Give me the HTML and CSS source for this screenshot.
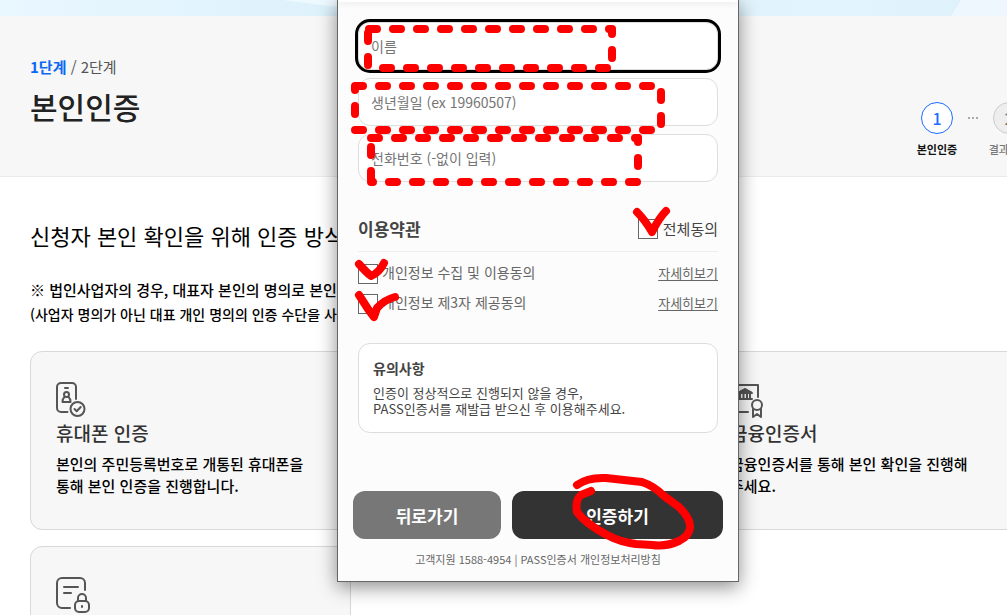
FILE: index.html
```html
<!DOCTYPE html>
<html lang="ko">
<head>
    <meta charset="UTF-8">
    <meta name="viewport" content="width=device-width, initial-scale=1.0">
    <title>본인인증</title>
    <link rel="stylesheet" href="styles.css">
</head>
<body>
    <div class="page">
        <div class="banner">
            <svg class="banner-art" viewBox="0 0 1007 16" preserveAspectRatio="none" aria-hidden="true">
                <path d="M283 0 Q310 4 340 7 L340 0Z" fill="#edf8ff"/>
                <path d="M961 0 L951 16 L1007 16 L1007 0Z" fill="#eef7fe"/>
            </svg>
        </div>

        <header class="page-header">
            <div>
                <p class="step-text"><strong>1단계</strong> / 2단계</p>
                <h1>본인인증</h1>
            </div>
            <ol class="steps">
                <li class="step active"><span class="circle">1</span>본인인증</li>
                <li class="dots" aria-hidden="true"><i></i><i></i><i></i></li>
                <li class="step"><span class="circle">2</span>결과확인</li>
            </ol>
        </header>

        <main class="content">
            <h2>신청자 본인 확인을 위해 인증 방식</h2>
            <p class="note"><b>※</b> 법인사업자의 경우, 대표자 본인의 명의로 본인인증</p>
            <p class="note small">(사업자 명의가 아닌 대표 개인 명의의 인증 수단을 사용</p>

            <div class="cards">
                <section class="card">
                    <svg class="icon" viewBox="0 0 36 36" aria-hidden="true">
                        <path d="M11.5 30H5a4 4 0 0 1-4-4V5a4 4 0 0 1 4-4h11a4 4 0 0 1 4 4v12M9 6h3"/>
                        <circle cx="10.5" cy="12.500" r="2.500"/>
                        <path d="M8.500 15Q6.500 16.500 6.500 20h8Q14.500 16.500 12.500 15"/>
                        <circle cx="21.500" cy="27" r="7"/>
                        <path d="M18.500 27l2.200 2.200 4-4.200"/>
                    </svg>
                    <h3>휴대폰 인증</h3>
                    <p>본인의 주민등록번호로 개통된 휴대폰을 통해 본인 인증을 진행합니다.</p>
                </section>
                <section class="card"></section>
                <section class="card">
                    <svg class="icon" viewBox="0 0 36 36" aria-hidden="true">
                        <path d="M18 30H1V3h27v12"/>
                        <path d="M8 17h14M10 16v-5M13.500 16v-5M17 16v-5M20 16v-5M8 11h14l-7-4z"/>
                        <path d="M9 10.500h12l-6-3z" fill="#555"/>
                        <circle cx="27" cy="23" r="5"/>
                        <path d="M23 27v8l4-3 4 3v-8"/>
                    </svg>
                    <h3>금융인증서</h3>
                    <p>금융인증서를 통해 본인 확인을 진행해 주세요.</p>
                </section>
                <section class="card">
                    <svg class="icon" viewBox="0 0 36 36" aria-hidden="true">
                        <path d="M14 31H6a5 5 0 0 1-5-5V6a5 5 0 0 1 5-5h18a5 5 0 0 1 5 5v7M8 10h14M8 16h7"/>
                        <rect x="19" y="24" width="14" height="11" rx="4"/>
                        <path d="M22 24v-3a4 4 0 0 1 8 0v3M26 29v1"/>
                    </svg>
                </section>
            </div>
        </main>
    </div>

    <form class="popup">
        <div class="popup-top"></div>
        <div class="popup-body">
            <div class="fields">
                <input type="text" class="field focused" placeholder="이름" aria-label="이름">
                <input type="text" class="field" placeholder="생년월일 (ex 19960507)" aria-label="생년월일">
                <input type="text" class="field" placeholder="전화번호 (-없이 입력)" aria-label="전화번호">
            </div>

            <div class="terms-head">
                <h2>이용약관</h2>
                <label class="check all"><input type="checkbox">전체동의</label>
            </div>
            <div class="terms-row">
                <label class="check"><input type="checkbox">개인정보 수집 및 이용동의</label>
                <a href="#">자세히보기</a>
            </div>
            <div class="terms-row">
                <label class="check"><input type="checkbox">개인정보 제3자 제공동의</label>
                <a href="#">자세히보기</a>
            </div>

            <div class="notice">
                <h3>유의사항</h3>
                <p>인증이 정상적으로 진행되지 않을 경우,<br>PASS인증서를 재발급 받으신 후 이용해주세요.</p>
            </div>
        </div>

        <div class="buttons">
            <button type="button" class="back">뒤로가기</button>
            <button type="button" class="submit">인증하기</button>
        </div>
        <p class="support">고객지원 1588-4954 | PASS인증서 개인정보처리방침</p>
    </form>

    <!-- red pen marks over the form -->
    <svg class="marks" width="1007" height="615" viewBox="0 0 1007 615" aria-hidden="true">
        <g class="dashed">
            <path d="M368 29H612" stroke-dashoffset="-1"/>
            <path d="M612 30V66" stroke-dashoffset="4"/>
            <path d="M368 32V68" stroke-dashoffset="-1"/>
            <path d="M383 68H608"/>
            <path d="M355 86H652"/>
            <path d="M355 88V128" stroke-dashoffset="6"/>
            <path d="M661 92V128"/>
            <path d="M355 130H652"/>
            <path d="M371 138H638"/>
            <path d="M371 147V182"/>
            <path d="M638 138V170" stroke-dashoffset="4"/>
            <path d="M371 182H638" stroke-dashoffset="6"/>
        </g>
        <path class="pen" d="M637 212Q645 220 652 232Q659 218 666 211"/>
        <path class="pen" d="M359 264Q366 272 371 276Q379 273 384 263"/>
        <path class="pen" d="M359 295L368 309L374 317L377 308Q384 300 395 297"/>
        <path class="pen" d="M577 485Q588 477 606 478L642 482Q654 486 664 496L679 507Q691 519 690 528Q689 536 679 541Q666 547 652 545L636 544Q620 542 607 535Q586 524 577 512Q575 500 581 495L591 491"/>
    </svg>
</body>
</html>
```
FILE: styles.css
```css
* {
    box-sizing: border-box;
}

body {
    margin: 0;
    background: #fff;
    color: #000;
    font-family: "Noto Sans CJK KR", "Noto Sans", sans-serif;
    overflow: hidden;
}

h1, h2, h3, p, ol {
    margin: 0;
    padding: 0;
}

.page {
    min-width: 1060px;
}

.banner {
    height: 16px;
    background: linear-gradient(90deg, #e9f7ff, #dcf1fb 35%, #e2f4fd 80%, #dceffa);
}

.banner-art {
    display: block;
    width: 1007px;
    height: 16px;
}

.page-header {
    display: flex;
    justify-content: space-between;
    height: 161px;
    padding: 40px 30px 0;
    background: #f7f7f7;
    border-bottom: 1px solid #ebebeb;
}

.step-text {
    color: #555;
    font-size: 15px;
    line-height: 22px;
}

.step-text strong {
    color: #0b68f5;
}

h1 {
    margin-top: 6px;
    color: #222;
    font-size: 30px;
    font-weight: 500;
    line-height: 44px;
}

.steps {
    display: flex;
    gap: 10px;
    padding-top: 46px;
    list-style: none;
}

.step {
    display: flex;
    flex-direction: column;
    align-items: center;
    gap: 7px;
    width: 42px;
    color: #777;
    font-size: 11px;
    font-weight: 500;
    line-height: 16px;
    white-space: nowrap;
}

.circle {
    display: flex;
    align-items: center;
    justify-content: center;
    width: 32px;
    height: 32px;
    border: 1px solid #ccc;
    border-radius: 50%;
    background: #eee;
    font-size: 16px;
}

.active {
    color: #111;
    font-weight: 700;
}

.active .circle {
    border-color: #1a6dff;
    background: #fff;
    color: #1a6dff;
    font-weight: 500;
}

.dots {
    display: flex;
    gap: 2px;
    padding-top: 15px;
}

.dots i {
    width: 2px;
    height: 2px;
    background: #aaa;
}

.content {
    padding: 40px 30px 0;
}

.content h2 {
    font-size: 22px;
    font-weight: 400;
    line-height: 36px;
}

.note {
    font-size: 15px;
    font-weight: 500;
    line-height: 24px;
}

.content h2 + .note {
    margin-top: 25px;
}

.note.small {
    font-size: 14px;
}

.cards {
    display: grid;
    grid-template-columns: repeat(3, 321px);
    gap: 16px;
    margin-top: 25px;
}

.card {
    min-height: 179px;
    padding: 30px 25px;
    background: #f7f7f7;
    border: 1px solid #d8d8d8;
    border-radius: 12px;
}

.icon {
    display: block;
    width: 36px;
    height: 36px;
    fill: none;
    stroke: #555;
    stroke-width: 2;
    stroke-linecap: round;
    stroke-linejoin: round;
}

.card h3 {
    color: #333;
    font-size: 19px;
    font-weight: 500;
    line-height: 30px;
}

.card p {
    margin-top: 5px;
    font-size: 15px;
    font-weight: 500;
    line-height: 22px;
    word-break: keep-all;
}

/* popup window */
.popup {
    position: absolute;
    top: 0;
    left: 337px;
    width: 402px;
    padding-bottom: 12px;
    background: #fcfcfc;
    border: 1px solid #666;
    border-top: 0;
    box-shadow: 0 5px 18px rgba(0, 0, 0, 0.45);
}

.popup-top {
    height: 2px;
    background: #fff;
    box-shadow: 0 1px 6px rgba(0, 0, 0, 0.15);
}

.popup-body {
    padding: 20px 20px 0;
}

.fields {
    display: flex;
    flex-direction: column;
    gap: 8px;
}

.field {
    width: 100%;
    height: 48px;
    padding: 0 12px;
    background: #fff;
    border: 1px solid #ddd;
    border-radius: 12px;
    font-family: inherit;
    font-size: 14px;
}

.field::placeholder {
    color: #757575;
}

.focused {
    outline: 3px solid #000;
}

.terms-head {
    display: flex;
    align-items: center;
    justify-content: space-between;
    margin-top: 32px;
    padding-bottom: 7px;
    border-bottom: 1px solid #eee;
    color: #444;
}

.terms-head h2 {
    font-size: 17px;
    line-height: 30px;
}

.check {
    display: flex;
    gap: 4px;
    color: #666;
    font-size: 14px;
}

.check input {
    appearance: none;
    width: 20px;
    height: 20px;
    margin: 0;
    background: #fff;
    border: 1px solid #666;
}

.all {
    gap: 5px;
    color: #444;
    font-size: 15px;
    line-height: 20px;
}

.terms-row {
    display: flex;
    justify-content: space-between;
    height: 30px;
    padding-top: 5px;
    line-height: 17px;
}

.terms-head + .terms-row {
    height: 37px;
    padding-top: 12px;
}

.terms-row a {
    color: #666;
    font-size: 13px;
    text-underline-offset: 2px;
}

.notice {
    margin-top: 24px;
    padding: 14px;
    min-height: 90px;
    background: #fff;
    border: 1px solid #ddd;
    border-radius: 12px;
    color: #444;
}

.notice h3 {
    font-size: 14px;
    line-height: 20px;
}

.notice p {
    margin-top: 7px;
    font-size: 13px;
    line-height: 16px;
}

.buttons {
    display: grid;
    grid-template-columns: 148fr 211fr;
    gap: 11px;
    margin-top: 58px;
    padding: 0 15px;
}

.buttons button {
    height: 48px;
    padding: 0;
    border: 0;
    border-radius: 12px;
    color: #fff;
    font-family: inherit;
    font-size: 17px;
    font-weight: 700;
}

.back {
    background: #777;
}

.submit {
    background: #333;
}

.support {
    margin-top: 10px;
    color: #666;
    font-size: 11px;
    line-height: 20px;
    text-align: center;
}

.marks {
    position: absolute;
    top: 0;
    left: 0;
    fill: none;
    stroke: #f00;
    stroke-width: 8;
    stroke-linecap: round;
    stroke-linejoin: round;
    pointer-events: none;
}

.dashed {
    stroke-dasharray: 8 16;
}
```
